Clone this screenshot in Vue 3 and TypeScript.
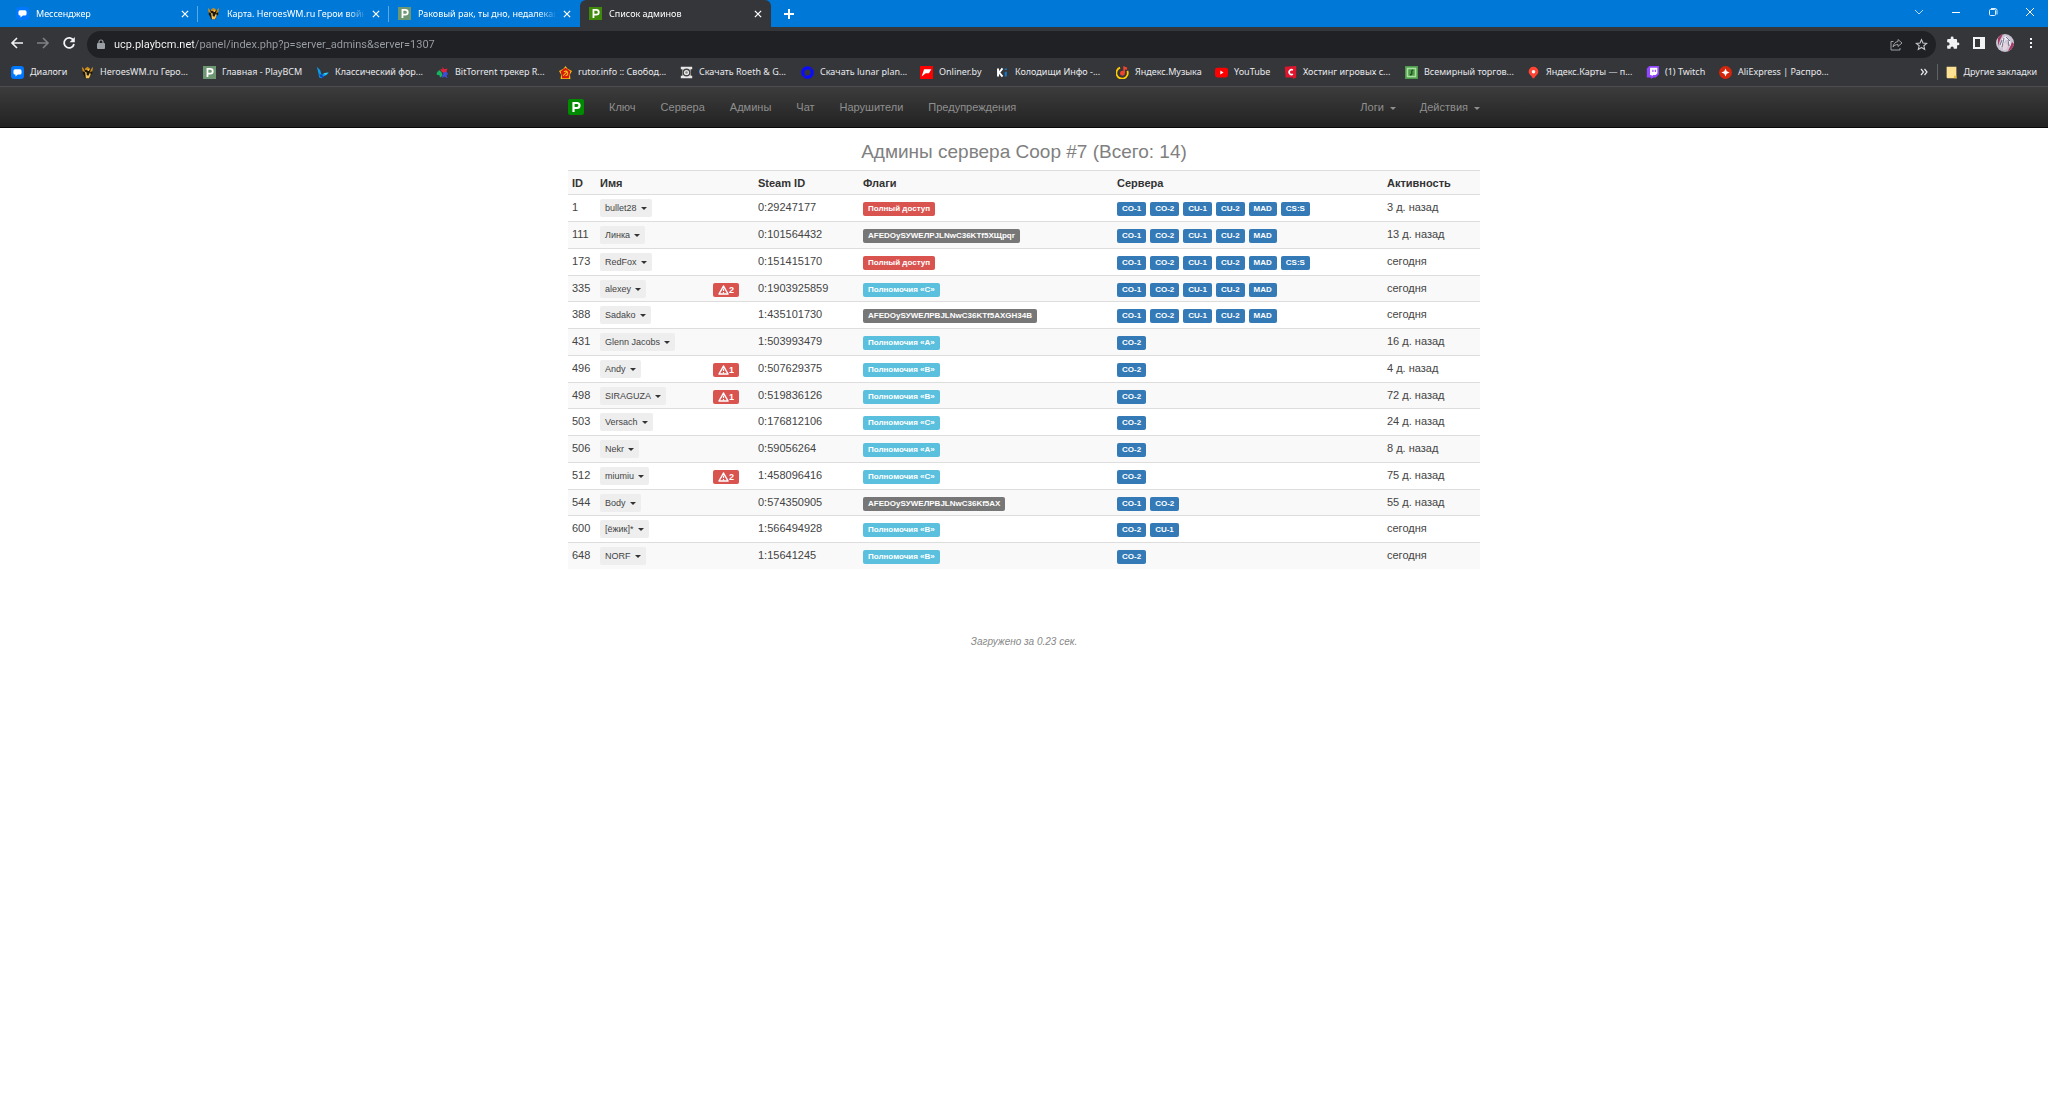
<script setup lang="ts">
interface Tab {
  icon: string
  title: string
  active?: boolean
}

interface Bookmark {
  icon: string
  title: string
  width: number
}

interface Admin {
  id: number
  name: string
  warnings?: number
  steam: string
  flags: string
  kind: 'danger' | 'info' | 'default'
  servers: string[]
  seen: string
}

const letterP = (bg: string) =>
  `<rect width="16" height="16" fill="${bg}"/><path d="M5.5 13.5V3.5H9a2.5 2.5 0 0 1 0 6H5.5" fill="none" stroke="#fff" stroke-width="2.2"/>`

const icons: Record<string, string> = {
  messenger:
    '<rect width="16" height="16" rx="4" fill="#07f"/><path d="M5 4h6a2 2 0 0 1 2 2v2.500a2 2 0 0 1-2 2H8.500L5.500 13v-2.500H5a2 2 0 0 1-2-2V6a2 2 0 0 1 2-2z" fill="#fff"/>',
  heroes:
    '<path d="M3 4h10l1 5-3 3v3H5l-1-3-2-3z" fill="#1b1508"/><path d="M1 1l3 3 1 4-3-2zM15 1l-3 3-1 4 3-2zM5 3l3-2 3 2v2H5z" fill="#c98a1b"/><path d="M5 7l2 1v3l2 1 2-4 1 2-2 5H6zM8 4h2v2H8z" fill="#f0c25a"/>',
  pMuted: letterP('#6d9673'),
  pGreen: letterP('#3f8a0b'),
  forum:
    '<path d="M1 1l4 4 2 6 3-2 6-1-3 3-4 2-2 2-3-1-1-5z" fill="#0a9be8"/><path d="M4 10l4 1 1 4-4-2z" fill="#0b3fc4"/><path d="M9 9l6-1-3 3z" fill="#33d0f5"/>',
  torrent:
    '<path d="M8 1l2 3 4-1-1 4-3 2-3-2-2-3 3 0z" fill="#e0243c"/><path d="M1 8l3-3 3 3 1 4-3 2-1-3-3 0z" fill="#17b35c"/><path d="M9 8l4-1 2 3-2 1 1 4-4-2-3 2z" fill="#3c4fd6"/>',
  rutor:
    '<path d="M8 0l2.500 3.500L16 6l-2.500 4.500L14 16H2l.5-5.500L0 6l5.500-2.500z" fill="#f2c218"/><path d="M8 2l6 4.500L12 15H4L2 6.500z" fill="#d9180c"/><path d="M5 12l5-5M6 7l3-1M9 6c3 2 2 6-1 6" fill="none" stroke="#f2c218" stroke-width="1.300"/>',
  roeth:
    '<path d="M1 1h14v3h-2v8h2v3H1v-3h2V4H1z" fill="#e8e8e8"/><circle cx="8" cy="8" r="4" fill="none" stroke="#444" stroke-width="1.600"/><circle cx="8" cy="8" r="1.500" fill="#888"/>',
  lunar:
    '<circle cx="8" cy="8" r="5.800" fill="none" stroke="#0a0aff" stroke-width="4"/><path d="M10 5l4-3M2 14l4-3" stroke="#35363a" stroke-width="1"/>',
  onliner: '<rect width="16" height="16" fill="#f00"/><path d="M5 4h9l-3 5H7l-5 4z" fill="#fff"/>',
  ki: '<path d="M2.500 3v10M8 3L4 8l4 5" fill="none" stroke="#fff" stroke-width="2.400"/><path d="M12 7v6M12 3v2" stroke="#1677c4" stroke-width="2.600"/>',
  music:
    '<path d="M5 2a7 7 0 1 0 9 4" fill="none" stroke="#fc0" stroke-width="2.200"/><path d="M9 0l5 2-1 3-2-1v5a3 3 0 1 1-2-3z" fill="#f0442c"/>',
  youtube: '<rect y="2" width="16" height="12" rx="3" fill="#f00"/><path d="M6.500 5.500v5l4-2.500z" fill="#fff"/>',
  hosting:
    '<path d="M1 1l14-1v14l-4 2v-2H2z" fill="#e0152d"/><path d="M11 5a3 3 0 1 0 0 5" fill="none" stroke="#fff" stroke-width="2"/>',
  trade:
    '<rect width="16" height="16" fill="#4c9a4c"/><rect x="2" y="2" width="12" height="12" fill="#a8e0a0"/><rect x="4" y="4" width="8" height="8" fill="#4f9a4a"/><path d="M6 11c5 0 0-6 4-6" fill="none" stroke="#1c4a20" stroke-width="1.500"/>',
  maps: '<path d="M8 1a6 6 0 0 0-6 6c0 3 4 5 5 8h2c1-3 5-5 5-8a6 6 0 0 0-6-6z" fill="#f43"/><circle cx="8" cy="7" r="2.200" fill="#fff"/>',
  twitch:
    '<path d="M4 0h12v10l-4 4H9l-3 2v-2H1V3z" fill="#9146ff"/><path d="M5 2h9v7l-2 2H9l-2 1.500V11H5z" fill="#fff"/><path d="M8.500 4.500v3M11.500 4.500v3" stroke="#9146ff" stroke-width="1.400"/>',
  ali: '<circle cx="8" cy="8" r="8" fill="#d3260c"/><path d="M8 3l1.500 3.500L13 8 9.500 9.500 8 13 6.500 9.500 3 8l3.500-1.500z" fill="#fff"/>',
  folder: '<path d="M2 1h12v13l1 1H3l-1-1z" fill="#fde293"/><path d="M11 12h3v3h-3z" fill="#e8b931"/>',
  close: '<path d="M3 3l10 10M13 3L3 13" stroke="currentColor" stroke-width="2"/>',
}

const tabs: Tab[] = [
  { icon: 'messenger', title: 'Мессенджер' },
  { icon: 'heroes', title: 'Карта. HeroesWM.ru Герои войны и денег' },
  { icon: 'pMuted', title: 'Раковый рак, ты дно, недалекая' },
  { icon: 'pGreen', title: 'Список админов', active: true },
]

const bookmarks: Bookmark[] = [
  { icon: 'messenger', title: 'Диалоги', width: 70 },
  { icon: 'heroes', title: 'HeroesWM.ru Геро...', width: 122 },
  { icon: 'pMuted', title: 'Главная - PlayBCM', width: 113 },
  { icon: 'forum', title: 'Классический фор...', width: 120 },
  { icon: 'torrent', title: 'BitTorrent трекер R...', width: 123 },
  { icon: 'rutor', title: 'rutor.info :: Свобод...', width: 121 },
  { icon: 'roeth', title: 'Скачать Roeth & G...', width: 121 },
  { icon: 'lunar', title: 'Скачать lunar plan...', width: 119 },
  { icon: 'onliner', title: 'Onliner.by', width: 76 },
  { icon: 'ki', title: 'Колодищи Инфо -...', width: 120 },
  { icon: 'music', title: 'Яндекс.Музыка', width: 99 },
  { icon: 'youtube', title: 'YouTube', width: 69 },
  { icon: 'hosting', title: 'Хостинг игровых с...', width: 121 },
  { icon: 'trade', title: 'Всемирный торгов...', width: 122 },
  { icon: 'maps', title: 'Яндекс.Карты — п...', width: 119 },
  { icon: 'twitch', title: '(1) Twitch', width: 73 },
  { icon: 'ali', title: 'AliExpress | Распро...', width: 120 },
]

const navLinks = ['Ключ', 'Сервера', 'Админы', 'Чат', 'Нарушители', 'Предупреждения']
const navMenus = ['Логи', 'Действия']

const base = ['CO-1', 'CO-2', 'CU-1', 'CU-2', 'MAD']
const full = [...base, 'CS:S']

const admins: Admin[] = [
  { id: 1, name: 'bullet28', steam: '0:29247177', flags: 'Полный доступ', kind: 'danger', servers: full, seen: '3 д. назад' },
  { id: 111, name: 'Линка', steam: '0:101564432', flags: 'AFEDOySУWEЛPJLNwC36KTf5XЩpqr', kind: 'default', servers: base, seen: '13 д. назад' },
  { id: 173, name: 'RedFox', steam: '0:151415170', flags: 'Полный доступ', kind: 'danger', servers: full, seen: 'сегодня' },
  { id: 335, name: 'alexey', warnings: 2, steam: '0:1903925859', flags: 'Полномочия «C»', kind: 'info', servers: base, seen: 'сегодня' },
  { id: 388, name: 'Sadako', steam: '1:435101730', flags: 'AFEDOySУWEЛPBJLNwC36KTf5AXGH34B', kind: 'default', servers: base, seen: 'сегодня' },
  { id: 431, name: 'Glenn Jacobs', steam: '1:503993479', flags: 'Полномочия «A»', kind: 'info', servers: ['CO-2'], seen: '16 д. назад' },
  { id: 496, name: 'Andy', warnings: 1, steam: '0:507629375', flags: 'Полномочия «B»', kind: 'info', servers: ['CO-2'], seen: '4 д. назад' },
  { id: 498, name: 'SIRAGUZA', warnings: 1, steam: '0:519836126', flags: 'Полномочия «B»', kind: 'info', servers: ['CO-2'], seen: '72 д. назад' },
  { id: 503, name: 'Versach', steam: '0:176812106', flags: 'Полномочия «C»', kind: 'info', servers: ['CO-2'], seen: '24 д. назад' },
  { id: 506, name: 'Nekr', steam: '0:59056264', flags: 'Полномочия «A»', kind: 'info', servers: ['CO-2'], seen: '8 д. назад' },
  { id: 512, name: 'miumiu', warnings: 2, steam: '1:458096416', flags: 'Полномочия «C»', kind: 'info', servers: ['CO-2'], seen: '75 д. назад' },
  { id: 544, name: 'Body', steam: '0:574350905', flags: 'AFEDOySУWEЛPBJLNwC36Kf5AX', kind: 'default', servers: ['CO-1', 'CO-2'], seen: '55 д. назад' },
  { id: 600, name: '[ёжик]*', steam: '1:566494928', flags: 'Полномочия «B»', kind: 'info', servers: ['CO-2', 'CU-1'], seen: 'сегодня' },
  { id: 648, name: 'NORF', steam: '1:15641245', flags: 'Полномочия «B»', kind: 'info', servers: ['CO-2'], seen: 'сегодня' },
]
</script>

<template>
  <div class="window">
    <header class="chrome">
      <div class="tabstrip">
        <div v-for="tab in tabs" :key="tab.title" class="tab" :class="{ active: tab.active }">
          <svg class="favicon" viewBox="0 0 16 16" v-html="icons[tab.icon]"></svg>
          <span class="tab-title">{{ tab.title }}</span>
          <button class="icon-btn" aria-label="Закрыть вкладку">
            <svg width="10" height="10" viewBox="0 0 16 16" v-html="icons.close"></svg>
          </button>
        </div>
        <button class="icon-btn new-tab" aria-label="Новая вкладка">
          <svg width="12" height="12" viewBox="0 0 12 12"><path d="M6 1v10M1 6h10" stroke="#fff" stroke-width="2" /></svg>
        </button>
        <div class="window-controls">
          <button class="icon-btn" aria-label="Поиск вкладок">
            <svg width="10" height="10" viewBox="0 0 10 10"><path d="M1 3l4 4 4-4" fill="none" stroke="#b5dcfa" /></svg>
          </button>
          <button class="icon-btn" aria-label="Свернуть">
            <svg width="10" height="10" viewBox="0 0 10 10"><path d="M1 5.500h8" stroke="#fff" /></svg>
          </button>
          <button class="icon-btn" aria-label="Восстановить">
            <svg width="10" height="10" viewBox="0 0 10 10"><rect x="1.500" y="2.500" width="6" height="6" rx="1" fill="none" stroke="#dff0ff" /><path d="M3 1.500h4a2 2 0 0 1 2 2v4" fill="none" stroke="#dff0ff" /></svg>
          </button>
          <button class="icon-btn" aria-label="Закрыть">
            <svg width="10" height="10" viewBox="0 0 10 10"><path d="M1 1l8 8M9 1L1 9" stroke="#fff" /></svg>
          </button>
        </div>
      </div>

      <div class="toolbar">
        <div class="tool-group left">
          <button class="icon-btn" aria-label="Назад">
            <svg width="14" height="14" viewBox="0 0 14 14"><path d="M13 7H2M7 2L2 7l5 5" fill="none" stroke="#f1f3f4" stroke-width="1.600" /></svg>
          </button>
          <button class="icon-btn" aria-label="Вперёд">
            <svg width="14" height="14" viewBox="0 0 14 14"><path d="M1 7h11M7 2l5 5-5 5" fill="none" stroke="#7f8185" stroke-width="1.600" /></svg>
          </button>
          <button class="icon-btn" aria-label="Обновить">
            <svg width="14" height="14" viewBox="0 0 14 14"><path d="M11.500 4.500A5 5 0 1 0 12 8" fill="none" stroke="#f1f3f4" stroke-width="1.800" /><path d="M12.800 1v5.200H7.600z" fill="#f1f3f4" /></svg>
          </button>
        </div>
        <div class="omnibox">
          <svg width="8" height="11" viewBox="0 0 8 11"><rect y="4" width="8" height="6" rx="1" fill="#9aa0a6" /><path d="M2 4V3a2 2 0 0 1 4 0v1" fill="none" stroke="#9aa0a6" stroke-width="1.200" /></svg>
          <input class="url" type="text" aria-label="Адрес" value="ucp.playbcm.net/panel/index.php?p=server_admins&server=1307" />
          <button class="icon-btn" aria-label="Поделиться">
            <svg width="13" height="13" viewBox="0 0 13 13"><path d="M3.500 3.500h-2.500v8.500h9V10M8 1.500L12 5 8 8.500V6.500c-2.500 0-4 1-5 2.500C3.500 6 5 4 8 3.500z" fill="none" stroke="#9aa0a6" /></svg>
          </button>
          <button class="icon-btn" aria-label="Добавить в закладки">
            <svg width="13" height="13" viewBox="0 0 24 24"><path d="M12 3l2.700 6.300 6.800.6-5.200 4.500 1.600 6.700L12 17.500l-5.900 3.600 1.600-6.700-5.200-4.500 6.800-.6z" fill="none" stroke="#c4c7ca" stroke-width="2" /></svg>
          </button>
        </div>
        <div class="tool-group right">
          <button class="icon-btn" aria-label="Расширения">
            <svg width="14" height="14" viewBox="0 0 24 24"><path d="M20.500 11H19V7a2 2 0 0 0-2-2h-4V3.500a2.500 2.500 0 0 0-5 0V5H4a2 2 0 0 0-2 2v3.800h1.500a2.700 2.700 0 0 1 0 5.400H2V20a2 2 0 0 0 2 2h3.800v-1.500a2.700 2.700 0 0 1 5.400 0V22H17a2 2 0 0 0 2-2v-4h1.500a2.500 2.500 0 0 0 0-5z" fill="#f1f3f4" /></svg>
          </button>
          <button class="icon-btn" aria-label="Боковая панель">
            <svg width="12" height="12" viewBox="0 0 12 12"><rect x="1" y="1" width="10" height="10" fill="none" stroke="#f1f3f4" stroke-width="2" /><path d="M7 1h4v10H7z" fill="#f1f3f4" /></svg>
          </button>
          <button class="icon-btn" aria-label="Профиль">
            <svg width="18" height="18" viewBox="0 0 18 18"><circle cx="9" cy="9" r="9" fill="#c9c3d4" /><path d="M2 4a9 9 0 0 1 5-4l-3 6-2 6zM16 8l2 2a9 9 0 0 1-6 7l2-4z" fill="#a83a62" /><path d="M6 5l4-3 4 4 1 6-3-3-2-4-3 6-3 3z" fill="#f3f0f8" /><path d="M7 11l3-3 2 4-2 4H7z" fill="#e7d5dd" /><path d="M4 11l2-5M12 6l1 6M8 4l-2 9M10 3l4 4" fill="none" stroke="#77708c" /></svg>
          </button>
          <button class="icon-btn" aria-label="Меню">
            <svg width="14" height="14" viewBox="0 0 14 14"><path d="M6 2h2v2H6zM6 6h2v2H6zM6 10h2v2H6z" fill="#f1f3f4" /></svg>
          </button>
        </div>
      </div>

      <nav class="bookmarks" aria-label="Закладки">
        <a v-for="mark in bookmarks" :key="mark.title" href="#" class="bookmark" :style="{ width: mark.width + 'px' }">
          <svg class="favicon" viewBox="0 0 16 16" v-html="icons[mark.icon]"></svg>
          <span>{{ mark.title }}</span>
        </a>
        <div class="bookmarks-end">
          <button class="icon-btn" aria-label="Ещё закладки">
            <svg width="8" height="8" viewBox="0 0 8 8"><path d="M1 1l2.500 3L1 7M4.500 1L7 4 4.500 7" fill="none" stroke="#e8eaed" stroke-width="1.200" /></svg>
          </button>
          <a href="#" class="bookmark other">
            <svg class="favicon" viewBox="0 0 16 16" v-html="icons.folder"></svg>
            <span>Другие закладки</span>
          </a>
        </div>
      </nav>
    </header>

    <nav class="navbar">
      <div class="container nav-inner">
        <a href="#" class="brand" aria-label="PlayBCM">
          <svg width="16" height="16" viewBox="0 0 16 16"><rect width="16" height="16" rx="2" fill="#008a00" /><path d="M5.500 13V4H9a2.300 2.300 0 0 1 0 5H5.500" fill="none" stroke="#fff" stroke-width="2.200" /></svg>
        </a>
        <a v-for="link in navLinks" :key="link" href="#" class="nav-link">{{ link }}</a>
        <div class="nav-right">
          <a v-for="menu in navMenus" :key="menu" href="#" class="nav-link">{{ menu }}<i class="caret"></i></a>
        </div>
      </div>
    </nav>

    <main class="container">
      <h1>Админы сервера Coop #7 (Всего: 14)</h1>
      <table>
        <colgroup>
          <col class="c-id" />
          <col class="c-name" />
          <col class="c-warn" />
          <col class="c-steam" />
          <col class="c-flags" />
          <col class="c-servers" />
          <col />
        </colgroup>
        <thead>
          <tr>
            <th>ID</th>
            <th colspan="2">Имя</th>
            <th>Steam ID</th>
            <th>Флаги</th>
            <th>Сервера</th>
            <th>Активность</th>
          </tr>
        </thead>
        <tbody>
          <tr v-for="admin in admins" :key="admin.id">
            <td>{{ admin.id }}</td>
            <td>
              <button class="user">{{ admin.name }}<i class="caret"></i></button>
            </td>
            <td>
              <div v-if="admin.warnings" class="labels">
                <span class="label danger warn">
                  <svg width="11" height="10" viewBox="0 0 22 20"><path d="M11 2l9 16H2z" fill="none" stroke="#fff" stroke-width="3" stroke-linejoin="round" /><path d="M11 7v5M11 14v3" stroke="#fff" stroke-width="2.400" /></svg>{{ admin.warnings }}
                </span>
              </div>
            </td>
            <td>{{ admin.steam }}</td>
            <td>
              <div class="labels"><span class="label" :class="admin.kind">{{ admin.flags }}</span></div>
            </td>
            <td>
              <div class="labels">
                <span v-for="server in admin.servers" :key="server" class="label primary">{{ server }}</span>
              </div>
            </td>
            <td>{{ admin.seen }}</td>
          </tr>
        </tbody>
      </table>
      <footer>Загружено за 0.23 сек.</footer>
    </main>
  </div>
</template>

<style>
body {
  background: #fff;
}
</style>

<style scoped>
.window {
  font-family: "Liberation Sans", Arial, sans-serif;
  font-size: 11px;
  line-height: 16px;
  color: #444;
}

a {
  color: inherit;
  text-decoration: none;
}

button {
  font: inherit;
  color: inherit;
  border: 0;
  padding: 0;
  background: none;
}

svg {
  display: block;
  flex: none;
}

.chrome {
  font-family: "Noto Sans", "Open Sans", sans-serif;
  font-size: 9px;
  color: #e8eaed;
  background: #35363a;
}

.icon-btn {
  flex: none;
  display: flex;
  align-items: center;
  justify-content: center;
}

.favicon {
  width: 13px;
  height: 13px;
}

.tabstrip {
  display: flex;
  height: 27px;
  padding-left: 7px;
  background: #0078d7;
  color: #fff;
}

.tab {
  box-sizing: border-box;
  flex: none;
  width: 191px;
  display: flex;
  align-items: center;
  gap: 7px;
  padding: 0 8px 0 9px;
  background: linear-gradient(#58a9e8, #58a9e8) right center / 1px 16px no-repeat;
}

.tab:nth-child(3) {
  background: none;
}

.tab.active {
  background: #35363a;
  border-radius: 6px 6px 0 0;
}

.tab-title {
  flex: 1;
  min-width: 0;
  overflow: hidden;
  white-space: nowrap;
  mask-image: linear-gradient(to right, #000 120px, transparent 140px);
}

.new-tab {
  margin-left: 12px;
}

.window-controls {
  margin-left: auto;
  display: flex;
  gap: 27px;
  padding: 0 13px 4px 0;
}

.toolbar {
  display: flex;
  align-items: center;
  height: 31px;
}

.tool-group {
  display: flex;
  align-items: center;
}

.tool-group.left {
  padding: 0 5px 0 4px;
}

.tool-group.right {
  padding: 0 4px;
}

.tool-group .icon-btn {
  width: 26px;
}

.omnibox {
  flex: 1;
  display: flex;
  align-items: center;
  gap: 12px;
  box-sizing: border-box;
  height: 27px;
  margin-top: 4px;
  padding: 0 8px 0 10px;
  border-radius: 14px;
  background: #202124;
}

.url {
  flex: 1;
  min-width: 0;
  border: 0;
  padding: 0;
  outline: 0;
  margin-left: -3px;
  font-family: Roboto, sans-serif;
  font-size: 11px;
  line-height: 16px;
  color: transparent;
  background: linear-gradient(to right, #fff 80px, #9aa0a6 80px);
  background-clip: text;
}

.bookmarks {
  display: flex;
  align-items: center;
  height: 28px;
  padding-left: 11px;
  border-bottom: 1px solid #4c4c52;
}

.bookmark {
  flex: none;
  display: flex;
  align-items: center;
  gap: 6px;
  white-space: nowrap;
}

.bookmarks-end {
  margin-left: auto;
  display: flex;
  align-items: center;
  gap: 9px;
  padding-right: 11px;
}

.bookmark.other {
  border-left: 1px solid #5f6368;
  padding-left: 7px;
}

.container {
  box-sizing: border-box;
  width: 100%;
  max-width: 912px;
  margin: 0 auto;
}

.navbar {
  background: linear-gradient(#3c3c3c, #222);
  border-bottom: 1px solid #080808;
}

.nav-inner {
  display: flex;
  align-items: center;
  height: 40px;
  gap: 25px;
  color: #8f8f8f;
}

.nav-right {
  display: flex;
  gap: 24px;
  margin-left: auto;
}

.caret {
  display: inline-block;
  margin-left: 6px;
  vertical-align: middle;
  border-top: 3px solid currentColor;
  border-left: 3px solid transparent;
  border-right: 3px solid transparent;
}

h1 {
  margin: 0;
  padding: 14px 0 8px;
  font-size: 19px;
  line-height: 20px;
  font-weight: 400;
  text-align: center;
  color: #808080;
}

table {
  width: 100%;
  table-layout: fixed;
  border-collapse: separate;
  border-spacing: 0;
}

.c-id {
  width: 28px;
}

.c-name {
  width: 113px;
}

.c-warn {
  width: 45px;
}

.c-steam {
  width: 105px;
}

.c-flags {
  width: 254px;
}

.c-servers {
  width: 270px;
}

th,
td {
  padding: 4px 4px 0;
  border-top: 1px solid #ddd;
  text-align: left;
  vertical-align: top;
  white-space: nowrap;
}

th {
  height: 19px;
  color: #333;
}

td {
  height: 22px;
}

/* Every fourth row is a pixel shorter. */
tbody tr:nth-child(4n) td {
  height: 21px;
}

thead tr,
tbody tr:nth-child(even) {
  background: #f9f9f9;
}

.user {
  display: block;
  height: 18px;
  padding: 0 5px;
  border-radius: 2px;
  background: #eee;
  font-size: 9px;
  line-height: 18px;
}

.user .caret {
  margin-left: 4px;
  color: #333;
}

.labels {
  display: flex;
  gap: 4px;
  padding-top: 3px;
}

.label {
  padding: 0 5px;
  border-radius: 2px;
  font-size: 8px;
  line-height: 14px;
  font-weight: 700;
  color: #fff;
}

.warn {
  display: flex;
  align-items: center;
  padding: 0 5px;
  font-size: 9px;
}

.danger {
  background: #d9534f;
}

.info {
  background: #5bc0de;
}

.default {
  background: #777;
}

.primary {
  background: #337ab7;
}

footer {
  margin-top: 65px;
  font-size: 10px;
  font-style: italic;
  text-align: center;
  color: #888;
}
</style>
